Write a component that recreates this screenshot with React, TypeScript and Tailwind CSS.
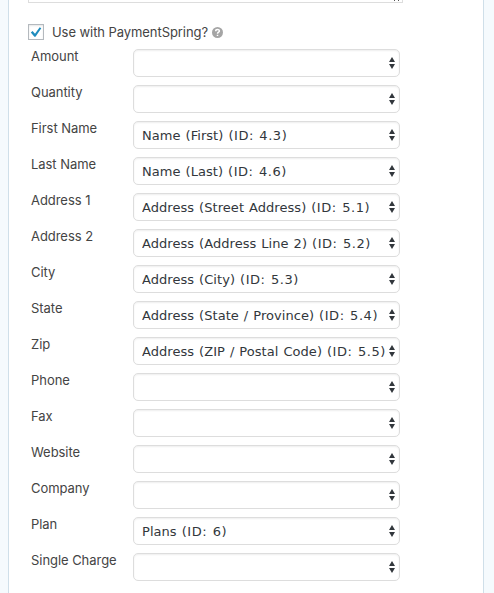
type Field = { label: string; name?: string; id?: string };

const fields: Field[] = [
  { label: 'Amount' },
  { label: 'Quantity' },
  { label: 'First Name', name: 'Name (First)', id: '4.3' },
  { label: 'Last Name', name: 'Name (Last)', id: '4.6' },
  { label: 'Address 1', name: 'Address (Street Address)', id: '5.1' },
  { label: 'Address 2', name: 'Address (Address Line 2)', id: '5.2' },
  { label: 'City', name: 'Address (City)', id: '5.3' },
  { label: 'State', name: 'Address (State / Province)', id: '5.4' },
  { label: 'Zip', name: 'Address (ZIP / Postal Code)', id: '5.5' },
  { label: 'Phone' },
  { label: 'Fax' },
  { label: 'Website' },
  { label: 'Company' },
  { label: 'Plan', name: 'Plans', id: '6' },
  { label: 'Single Charge' },
];

function Arrows() {
  return (
    <svg width="6" height="12" viewBox="0 0 6 12" className="shrink-0" fill="#32373c">
      <path d="M3 0 6 5H0Z" />
      <path d="M0 7h6L3 12Z" />
    </svg>
  );
}

function Select({ name, id }: { name?: string; id?: string }) {
  return (
    <button
      type="button"
      className="flex h-7 w-[267px] items-center rounded-[5px] border border-[#dddddd] bg-white pl-2 pr-1 text-left shadow-[inset_0_1px_2px_rgba(0,0,0,0.07)]"
    >
      <span className="w-[243px] shrink-0 overflow-hidden whitespace-nowrap pt-[2px] font-['DejaVu_Sans',sans-serif] text-[13px] leading-[20px] tracking-[0.05px] [word-spacing:0.8px] text-[#32373c]">
        {name && (
          <>
            {name} <span className="tracking-[0.55px]">{`(ID: ${id})`}</span>
          </>
        )}
      </span>
      <span className="ml-[4px] flex">
        <Arrows />
      </span>
    </button>
  );
}

export default function App() {
  return (
    <div className="h-[593px] w-[494px] overflow-hidden bg-[#f5fafd] pl-2 pr-[10px] font-['Inter',sans-serif] text-[13px] text-[#444444]">
      <div className="h-full border-x border-[#cfdfe9] bg-white pl-[19px]">
        <div className="flex h-[3px] w-[375px] items-start justify-end gap-[3px] border-x border-b border-[#dddddd] pr-[3px]">
          <i className="h-px w-px bg-[#555555]" />
          <i className="h-px w-px bg-[#555555]" />
        </div>
        <div className="flex h-[45px] items-start pt-[21px]">
          <span className="flex size-4 items-center justify-center border border-[#b4b9be] bg-white shadow-[inset_0_1px_2px_rgba(0,0,0,0.1)]">
            <svg width="12" height="12" viewBox="0 0 12 12" className="shrink-0" fill="#1e8cbe">
              <path d="M0.8 6.4 2.6 5 5 7.8 9.7 1.2 11.3 2.2 5.5 10.7H4.4Z" />
            </svg>
          </span>
          <span className="ml-[8px] w-[156px] whitespace-nowrap leading-4 tracking-[-0.07px]">Use with PaymentSpring?</span>
          <svg width="11" height="11" viewBox="0 0 11 11" className="ml-1 mt-[3px]">
            <circle cx="5.5" cy="5.5" r="5.5" fill="#a5a5a5" />
            <path d="M3.7 4.2C3.7 2 7.4 2.1 7.4 4 7.4 5.3 5.5 5.2 5.5 6.7M5.5 7.7V9.1" fill="none" stroke="#fff" strokeWidth="1.5" />
          </svg>
        </div>
        <div className="flex flex-col gap-[7px] pl-[3px]">
          {fields.map((f) => (
            <div key={f.label} className="flex h-[29px]">
              <span className="w-[102px] shrink-0 whitespace-nowrap leading-4 tracking-[-0.05px]">{f.label}</span>
              <div className="pt-px">
                <Select name={f.name} id={f.id} />
              </div>
            </div>
          ))}
        </div>
      </div>
    </div>
  );
}
